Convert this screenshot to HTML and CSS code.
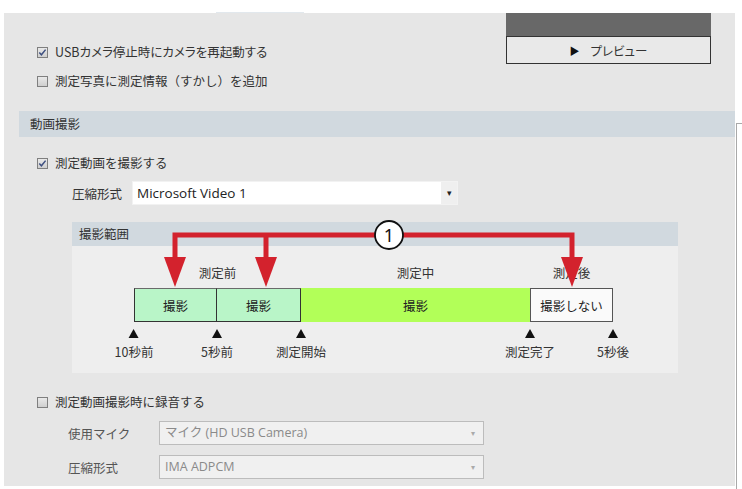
FILE: index.html
```html
<!DOCTYPE html>
<html lang="ja">
<head>
  <meta charset="UTF-8" />
  <title>動画撮影 設定</title>
  <link rel="stylesheet" href="styles.css">
</head>
<body>

  <div class="topbar"><div class="tab"></div></div>

  <div class="window">
    <div class="panel">

      <!-- camera options + preview -->
      <div class="top">
        <div class="options">
          <label class="check">
            <span class="box"><svg viewBox="0 0 11 11" width="11" height="11"><path d="M2.3 5.6 L4.4 7.8 L8.6 2.6" fill="none" stroke="#3d4f80" stroke-width="1.5"/></svg></span>
            <span class="tight">USBカメラ停止時にカメラを再起動する</span>
          </label>
          <label class="check">
            <span class="box"></span>
            測定写真に測定情報（すかし）を追加
          </label>
        </div>
        <div class="preview">
          <div class="screen"></div>
          <div class="preview-btn"><span class="play">▶</span><span class="tight">プレビュー</span></div>
        </div>
      </div>

      <div class="section-head">動画撮影</div>

      <div class="section">
        <label class="check check-video">
          <span class="box"><svg viewBox="0 0 11 11" width="11" height="11"><path d="M2.3 5.6 L4.4 7.8 L8.6 2.6" fill="none" stroke="#3d4f80" stroke-width="1.5"/></svg></span>
          測定動画を撮影する
        </label>

        <div class="field">
          <span class="field-label">圧縮形式</span>
          <div class="select">Microsoft Video 1<span class="arrow">▾</span></div>
        </div>

        <!-- recording range -->
        <div class="range">
          <div class="range-head">撮影範囲</div>
          <div class="range-body">
            <div class="timeline">
              <div class="phase p-before">測定前</div>
              <div class="phase p-during">測定中</div>
              <div class="phase p-after">測定後</div>

              <div class="seg mint s1">撮影</div>
              <div class="seg mint s2">撮影</div>
              <div class="seg lime s3">撮影</div>
              <div class="seg none s4">撮影しない</div>

              <div class="mark m1"><span class="tri"></span>10秒前</div>
              <div class="mark m2"><span class="tri"></span>5秒前</div>
              <div class="mark m3"><span class="tri"></span>測定開始</div>
              <div class="mark m4"><span class="tri"></span>測定完了</div>
              <div class="mark m5"><span class="tri"></span>5秒後</div>
            </div>
          </div>

          <!-- callout arrows -->
          <svg class="callout" width="606" height="70" viewBox="0 0 606 70">
            <path d="M103 37 V13 H500 V37 M194 13 V37" fill="none" stroke="#d3222d" stroke-width="5"/>
            <polygon points="92,35 114,35 103,65" fill="#d3222d"/>
            <polygon points="183,35 205,35 194,65" fill="#d3222d"/>
            <polygon points="489,35 511,35 500,65" fill="#d3222d"/>
            <circle cx="317" cy="13" r="14" fill="#fff" stroke="#111" stroke-width="1.8"/>
            <text x="317" y="19.5" text-anchor="middle" class="callout-num">1</text>
          </svg>
        </div>

        <label class="check check-audio">
          <span class="box"></span>
          測定動画撮影時に録音する
        </label>

        <div class="field disabled">
          <span class="field-label">使用マイク</span>
          <div class="select">マイク (HD USB Camera)<span class="arrow">▾</span></div>
        </div>
        <div class="field disabled second">
          <span class="field-label">圧縮形式</span>
          <div class="select">IMA ADPCM<span class="arrow">▾</span></div>
        </div>
      </div>

    </div>
    <div class="scroll-edge"></div>
  </div>

</body>
</html>
```

FILE: styles.css
```css
body {
  margin: 0;
  width: 742px;
  height: 489px;
  overflow: hidden;
  background: #fff;
  font-family: "Noto Sans CJK JP", sans-serif;
  font-size: 12.5px;
  color: #333;
}

.tight {
  font-feature-settings: "palt";
}

.topbar {
  height: 13px;
}

.tab {
  margin-left: 216px;
  width: 88px;
  height: 13px;
  box-sizing: border-box;
  border-bottom: 1px solid #e2e8ed;
}

.window {
  display: flex;
  padding-left: 4px;
}

.panel {
  width: 732px;
  height: 473px;
  background: #e6e6e6;
  overflow: hidden;
}

.scroll-edge {
  width: 5px;
  height: 366px;
  margin-top: 110px;
  margin-left: 1px;
  border-left: 1px solid #a9a9a9;
  border-top: 1px solid #a9a9a9;
}

/* top block */
.top {
  display: flex;
  justify-content: space-between;
}

.options {
  padding: 29px 0 0 33px;
  display: flex;
  flex-direction: column;
  gap: 9px;
}

.check {
  display: flex;
  align-items: center;
  gap: 7px;
  height: 20px;
  line-height: 20px;
}

.box {
  width: 11px;
  height: 11px;
  flex: none;
  box-sizing: border-box;
  border: 1px solid #7f7f7f;
  background: linear-gradient(#e9e9e9, #cfcfcf);
  display: flex;
  align-items: center;
  justify-content: center;
}

.box svg {
  flex: none;
}

.preview {
  width: 205px;
  margin-right: 24px;
}

.screen {
  height: 23px;
  background: #686868;
}

.preview-btn {
  height: 28px;
  box-sizing: border-box;
  border: 1px solid #333;
  background: #e9e9e9;
  display: flex;
  align-items: center;
  justify-content: center;
  gap: 11px;
  color: #333;
}

.play {
  font-size: 10px;
  color: #111;
}

/* section */
.section-head {
  margin: 20px 0 0 15px;
  height: 26px;
  line-height: 26px;
  padding-left: 11px;
  background: #d1d9df;
}

.section {
  padding-left: 33px;
}

.check-video {
  margin-top: 16px;
}

.field {
  display: flex;
  align-items: center;
  height: 24px;
  margin-top: 8px;
  margin-left: 35px;
}

.field-label {
  width: 60px;
  flex: none;
}

.select {
  position: relative;
  width: 326px;
  height: 24px;
  box-sizing: border-box;
  background: #fff;
  border: 1px solid #f2f2f2;
  padding-left: 4px;
  line-height: 22px;
  font-family: "Open Sans", "Noto Sans CJK JP", sans-serif;
  font-size: 13.5px;
  color: #222;
}

.arrow {
  position: absolute;
  right: 0;
  top: 0;
  width: 16px;
  height: 22px;
  background: #efefef;
  text-align: center;
  font-size: 9px;
  color: #222;
}

.field.disabled {
  margin-left: 31px;
  margin-top: 9px;
  color: #555;
}

.field.disabled.second {
  margin-top: 10px;
}

.field.disabled .field-label {
  width: 91px;
}

.field.disabled .select {
  width: 325px;
  background: #f0f0f0;
  border: 1px solid #bcbcbc;
  padding-left: 5px;
  font-size: 12.5px;
  color: #8a8a8a;
}

.field.disabled .arrow {
  background: transparent;
  color: #aaa;
  font-size: 8px;
  right: 2px;
}

/* recording range */
.range {
  position: relative;
  width: 606px;
  margin: 17px 0 0 35px;
}

.range-head {
  height: 24px;
  line-height: 24px;
  padding-left: 7px;
  background: #d1d9df;
}

.range-body {
  height: 127px;
  box-sizing: border-box;
  padding-top: 17px;
  background: #eeeeee;
}

.timeline {
  display: grid;
  grid-template-columns: 83px 84px 229px 83px;
  grid-template-rows: 20px 34px auto;
  row-gap: 5px;
  margin-left: 62px;
  width: 479px;
}

.phase {
  line-height: 20px;
  text-align: center;
  grid-row: 1;
}

.p-before { grid-column: 1 / 3; }
.p-during { grid-column: 3; }
.p-after  { grid-column: 4; }

.seg {
  grid-row: 2;
  box-sizing: border-box;
  display: flex;
  align-items: center;
  justify-content: center;
  color: #222;
}

.mint {
  background: #b9f5c8;
  border: 1px solid #333;
  border-top-color: #6a6a6a;
}

.s2 {
  border-left: none;
}

.lime {
  background: #b2ff58;
}

.none {
  background: #fafafa;
  border: 1px solid #555;
}

.mark {
  grid-row: 3;
  justify-self: start;
  transform: translateX(-50%);
  display: flex;
  flex-direction: column;
  align-items: center;
  line-height: 20px;
  padding-top: 2px;
}

.m1 { grid-column: 1; }
.m2 { grid-column: 2; }
.m3 { grid-column: 3; }
.m4 { grid-column: 4; }
.m5 {
  grid-column: 4;
  justify-self: end;
  transform: translateX(50%);
}

.tri {
  width: 0;
  height: 0;
  border-left: 5px solid transparent;
  border-right: 5px solid transparent;
  border-bottom: 9px solid #111;
  margin-bottom: 4px;
}

.callout {
  position: absolute;
  left: 0;
  top: 0;
  overflow: visible;
  pointer-events: none;
}

.callout-num {
  font-family: "Noto Sans", sans-serif;
  font-size: 18px;
  fill: #111;
}

.check-audio {
  margin-top: 19px;
}
```
